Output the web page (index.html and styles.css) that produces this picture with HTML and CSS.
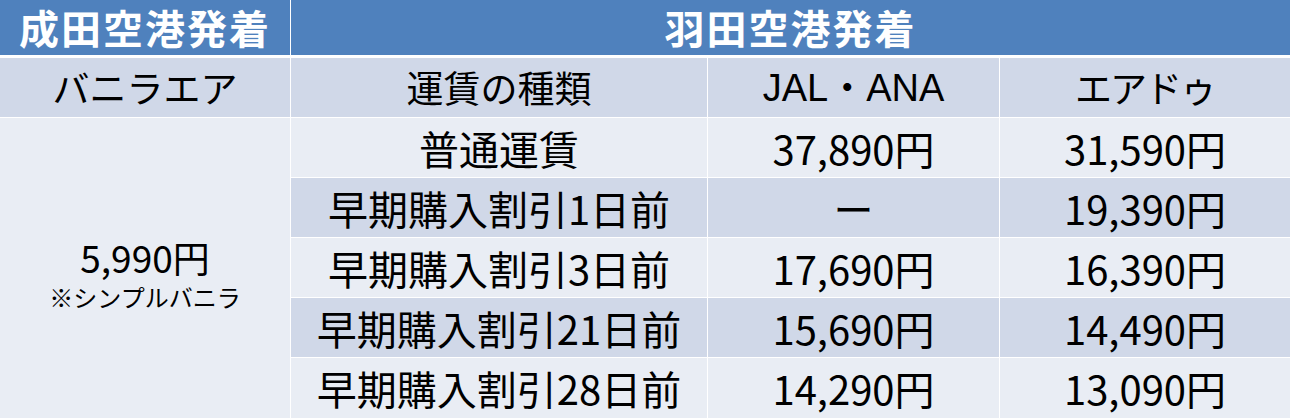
FILE: index.html
```html
<!DOCTYPE html>
<html lang="ja">
<head>
<meta charset="utf-8">
<link rel="stylesheet" href="styles.css">
</head>
<body>
<div class="table">
  <div class="head">
    <div class="hcell">成田空港発着</div>
    <div class="hcell">羽田空港発着</div>
  </div>
  <div class="body">
    <div class="cell sub">バニラエア</div>
    <div class="cell sub">運賃の種類</div>
    <div class="cell sub latin">JAL・ANA</div>
    <div class="cell sub tight">エアドゥ</div>

    <div class="cell light vanilla">
      <div class="price">5,990円</div>
      <div class="note">※シンプルバニラ</div>
    </div>

    <div class="cell light">普通運賃</div>
    <div class="cell light">37,890円</div>
    <div class="cell light">31,590円</div>

    <div class="cell dark">早期購入割引1日前</div>
    <div class="cell dark">ー</div>
    <div class="cell dark">19,390円</div>

    <div class="cell light">早期購入割引3日前</div>
    <div class="cell light">17,690円</div>
    <div class="cell light">16,390円</div>

    <div class="cell dark">早期購入割引21日前</div>
    <div class="cell dark">15,690円</div>
    <div class="cell dark">14,490円</div>

    <div class="cell light">早期購入割引28日前</div>
    <div class="cell light">14,290円</div>
    <div class="cell light">13,090円</div>
  </div>
</div>
</body>
</html>
```

FILE: styles.css
```css
html, body {
  margin: 0;
  padding: 0;
  background: #ffffff;
}

.table {
  width: 1290px;
  height: 418px;
  display: flex;
  flex-direction: column;
  font-family: "Noto Sans CJK JP", "Noto Sans", sans-serif;
  color: #000;
}

.head {
  display: grid;
  grid-template-columns: 290px 1fr;
  column-gap: 1px;
  height: 55px;
  margin-bottom: 3px;
}

.hcell {
  background: #4f81bd;
  color: #ffffff;
  font-weight: 700;
  font-size: 40px;
  letter-spacing: 2px;
  display: flex;
  align-items: center;
  justify-content: center;
  line-height: 1;
  padding-bottom: 2px;
}

.body {
  display: grid;
  grid-template-columns: 290px 416px 291px 290px;
  grid-template-rows: 59px 59px 59px 59px 59px 60px;
  column-gap: 1px;
  row-gap: 1px;
}

.cell {
  display: flex;
  align-items: center;
  justify-content: center;
  font-size: 40px;
  line-height: 1;
  white-space: nowrap;
}

.sub {
  background: #d0d8e8;
  font-size: 37px;
}

.tight {
  letter-spacing: -2px;
}

.latin {
  font-family: "Liberation Sans", "Noto Sans CJK JP", sans-serif;
  font-size: 38px;
}

.light {
  background: #e9edf4;
}

.dark {
  background: #d0d8e8;
}

.vanilla {
  grid-row: 2 / span 5;
  grid-column: 1;
  flex-direction: column;
  padding-top: 12px;
}

.price {
  font-size: 37px;
}

.note {
  font-size: 24px;
  margin-top: 9px;
}
```
